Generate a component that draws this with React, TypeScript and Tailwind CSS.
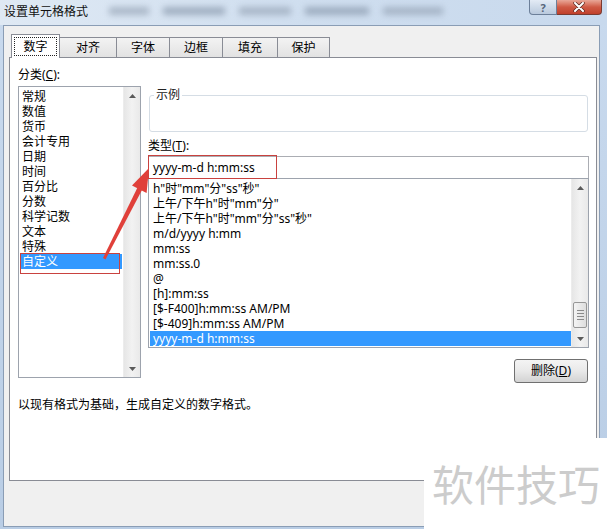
const categories = ['常规', '数值', '货币', '会计专用', '日期', '时间', '百分比', '分数', '科学记数', '文本', '特殊', '自定义'];

const formats = [
  'h"时"mm"分"ss"秒"',
  '上午/下午h"时"mm"分"',
  '上午/下午h"时"mm"分"ss"秒"',
  'm/d/yyyy h:mm',
  'mm:ss',
  'mm:ss.0',
  '@',
  '[h]:mm:ss',
  '[$-F400]h:mm:ss AM/PM',
  '[$-409]h:mm:ss AM/PM',
  'yyyy-m-d h:mm:ss',
];

const tabs = [
  { label: '数字', w: 'w-[49px]' },
  { label: '对齐', w: 'w-[58px]' },
  { label: '字体', w: 'w-[54px]' },
  { label: '边框', w: 'w-[54px]' },
  { label: '填充', w: 'w-[56px]' },
  { label: '保护', w: 'w-[53px]' },
];

const ArrowUp = () => (
  <svg width="7" height="4" viewBox="0 0 7 4">
    <path d="M0 4 L3.5 0 L7 4 Z" fill="#5a5a5a" />
  </svg>
);

const ArrowDown = () => (
  <svg width="7" height="4" viewBox="0 0 7 4">
    <path d="M0 0 L3.5 4 L7 0 Z" fill="#5a5a5a" />
  </svg>
);

const ScrollBar: React.FC<{ thumb?: boolean }> = ({ thumb }) => (
  <div className="w-[17px] flex flex-col bg-gradient-to-r from-[#e6e6e6] via-[#f2f2f2] to-[#e9e9e9] border-l border-[#ececec]">
    <div className="h-[17px] flex items-center justify-center">
      <ArrowUp />
    </div>
    <div className="flex-1 flex flex-col justify-end items-center pb-[2px]">
      {thumb && (
        <div className="w-[14px] h-[26px] rounded-[2px] border border-[#979797] bg-gradient-to-r from-[#f4f4f4] to-[#dedede] flex flex-col items-center justify-center gap-[2px]">
          <div className="w-[7px] h-px bg-[#8a8a8a]" />
          <div className="w-[7px] h-px bg-[#8a8a8a]" />
          <div className="w-[7px] h-px bg-[#8a8a8a]" />
          <div className="w-[7px] h-px bg-[#8a8a8a]" />
        </div>
      )}
    </div>
    <div className="h-[17px] flex items-center justify-center">
      <ArrowDown />
    </div>
  </div>
);

export default function App() {
  return (
    <div className="relative w-[607px] h-[529px] overflow-hidden bg-gradient-to-b from-[#c9daee] to-[#b9cde5] font-['Noto_Sans','Noto_Sans_CJK_SC',sans-serif] text-[12px] text-black">
      {/* title bar */}
      <div className="h-[25px] flex items-start bg-gradient-to-r from-[#dfe9f4] via-[#cfdeef] to-[#c8d9ed]">
        <span className="pl-[4px] pt-[4px] leading-[16px] text-[#111]">设置单元格格式</span>
        <div className="ml-[21px] mt-[7px] flex items-center gap-[14px] opacity-60">
          <div className="w-[40px] h-[8px] bg-[#8d9bad] blur-[3px]" />
          <div className="w-[62px] h-[8px] bg-[#7d8da1] blur-[3px]" />
          <div className="w-[52px] h-[8px] bg-[#8d9bad] blur-[3px]" />
          <div className="w-[64px] h-[8px] bg-[#7d8da1] blur-[3px]" />
          <div className="w-[60px] h-[8px] bg-[#8d9bad] blur-[3px]" />
        </div>
        <div className="ml-auto mr-[5px] flex">
          <div className="w-[28px] h-[15px] rounded-bl-[4px] border border-t-0 border-[#6c7f99] bg-gradient-to-b from-[#e3ebf5] to-[#b9c9dd] flex items-center justify-center text-[11px] leading-none font-bold text-[#55657a]">
            ?
          </div>
          <div className="w-[45px] h-[15px] rounded-br-[4px] border border-t-0 border-l-0 border-[#7a3a30] bg-gradient-to-b from-[#e8a798] via-[#cf5a45] to-[#c0402b] flex items-center justify-center">
            <svg width="12" height="10" viewBox="0 0 12 10">
              <path d="M2 1 L10 9 M10 1 L2 9" stroke="#5a2a22" strokeWidth="3.4" strokeLinecap="round" />
              <path d="M2 1 L10 9 M10 1 L2 9" stroke="#ffffff" strokeWidth="2" strokeLinecap="round" />
            </svg>
          </div>
        </div>
      </div>

      {/* dialog body */}
      <div className="ml-[3px] w-[597px] h-[502px] bg-[#f0f0f0] border border-[#8a9db5] pt-[8px]">
        {/* tabs */}
        <div className="flex items-end h-[23px] pl-[7px]">
          {tabs.map((t, i) =>
            i === 0 ? (
              <div
                key={t.label}
                className={`${t.w} h-[24px] -mb-px relative z-10 bg-white border border-b-0 border-[#898c95] p-[2px]`}
              >
                <div className="h-full border border-dotted border-[#222] flex items-center justify-center leading-[16px]">
                  {t.label}
                </div>
              </div>
            ) : (
              <div
                key={t.label}
                className={`${t.w} h-[20px] -ml-px bg-gradient-to-b from-[#f3f3f3] to-[#e2e2e2] border border-b-0 border-[#898c95] flex items-center justify-center leading-[16px]`}
              >
                {t.label}
              </div>
            )
          )}
        </div>

        {/* tab panel */}
        <div className="ml-[5px] w-[588px] h-[424px] bg-white border border-[#898c95] pl-[8px] pt-[9px]">
          <div className="flex gap-[7px] items-start">
            {/* category */}
            <div className="w-[123px] flex flex-col">
              <div className="leading-[16px]">
                分类(<span className="underline">C</span>):
              </div>
              <div className="mt-[3px] h-[292px] border border-[#9da3ad] flex">
                <div className="flex-1 pt-[2px] px-px">
                  {categories.map((c) => (
                    <div
                      key={c}
                      className={
                        c === '自定义'
                          ? 'h-[15px] leading-[15px] pl-[2px] bg-[#3399ff] text-white'
                          : 'h-[15px] leading-[15px] pl-[2px]'
                      }
                    >
                      {c}
                    </div>
                  ))}
                </div>
                <ScrollBar />
              </div>
            </div>

            {/* type */}
            <div className="w-[441px] flex flex-col">
              <fieldset className="mt-[21px] ml-px w-[439px] h-[44px] border border-[#d5dde5] rounded-[3px] px-[4px]">
                <legend className="px-[2px] leading-[14px] text-[#222]">示例</legend>
              </fieldset>
              <div className="mt-[6px] leading-[16px]">
                类型(<span className="underline">T</span>):
              </div>
              <div className="mt-[2px] h-[23px] border border-[#abadb3] pl-[4px] leading-[21px]">
                yyyy-m-d h:mm:ss
              </div>
              <div className="-mt-px h-[170px] border border-[#9da3ad] flex">
                <div className="w-[422px] pt-[2px] pl-px">
                  {formats.map((f, i) => (
                    <div
                      key={f}
                      className={
                        i === formats.length - 1
                          ? 'h-[15px] leading-[15px] pl-[3px] whitespace-nowrap bg-[#3399ff] text-white'
                          : 'h-[15px] leading-[15px] pl-[3px] whitespace-nowrap'
                      }
                    >
                      {f}
                    </div>
                  ))}
                </div>
                <ScrollBar thumb />
              </div>
              <button className="mt-[11px] mr-px self-end w-[74px] h-[24px] rounded-[3px] border border-[#707070] bg-gradient-to-b from-[#f4f4f4] via-[#e9e9e9] to-[#d3d3d3] leading-[16px]">
                删除(<span className="underline">D</span>)
              </button>
            </div>
          </div>
          <div className="mt-[14px] leading-[16px]">以现有格式为基础，生成自定义的数字格式。</div>
        </div>
      </div>

      {/* annotation overlay */}
      <svg className="absolute left-0 top-0 pointer-events-none" width="607" height="529" viewBox="0 0 607 529">
        <rect x="20.5" y="253.5" width="99" height="20" fill="none" stroke="#c9423f" strokeWidth="1" />
        <rect x="148.5" y="155.5" width="128" height="23" fill="none" stroke="#c9423f" strokeWidth="1" />
        <path d="M103 258 L105.5 259.5 L142 190 L137.5 187.6 Z" fill="#e0403a" />
        <path d="M149 168 L146.6 193 L132 185.6 Z" fill="#e0403a" />
      </svg>

      {/* watermark */}
      <div className="absolute left-[424px] top-[438px] w-[183px] h-[91px] bg-white pl-[8px] pt-[24px] text-[42px] leading-none text-[#cccccc] font-['Noto_Sans_CJK_SC',sans-serif]">
        软件技巧
      </div>
    </div>
  );
}
